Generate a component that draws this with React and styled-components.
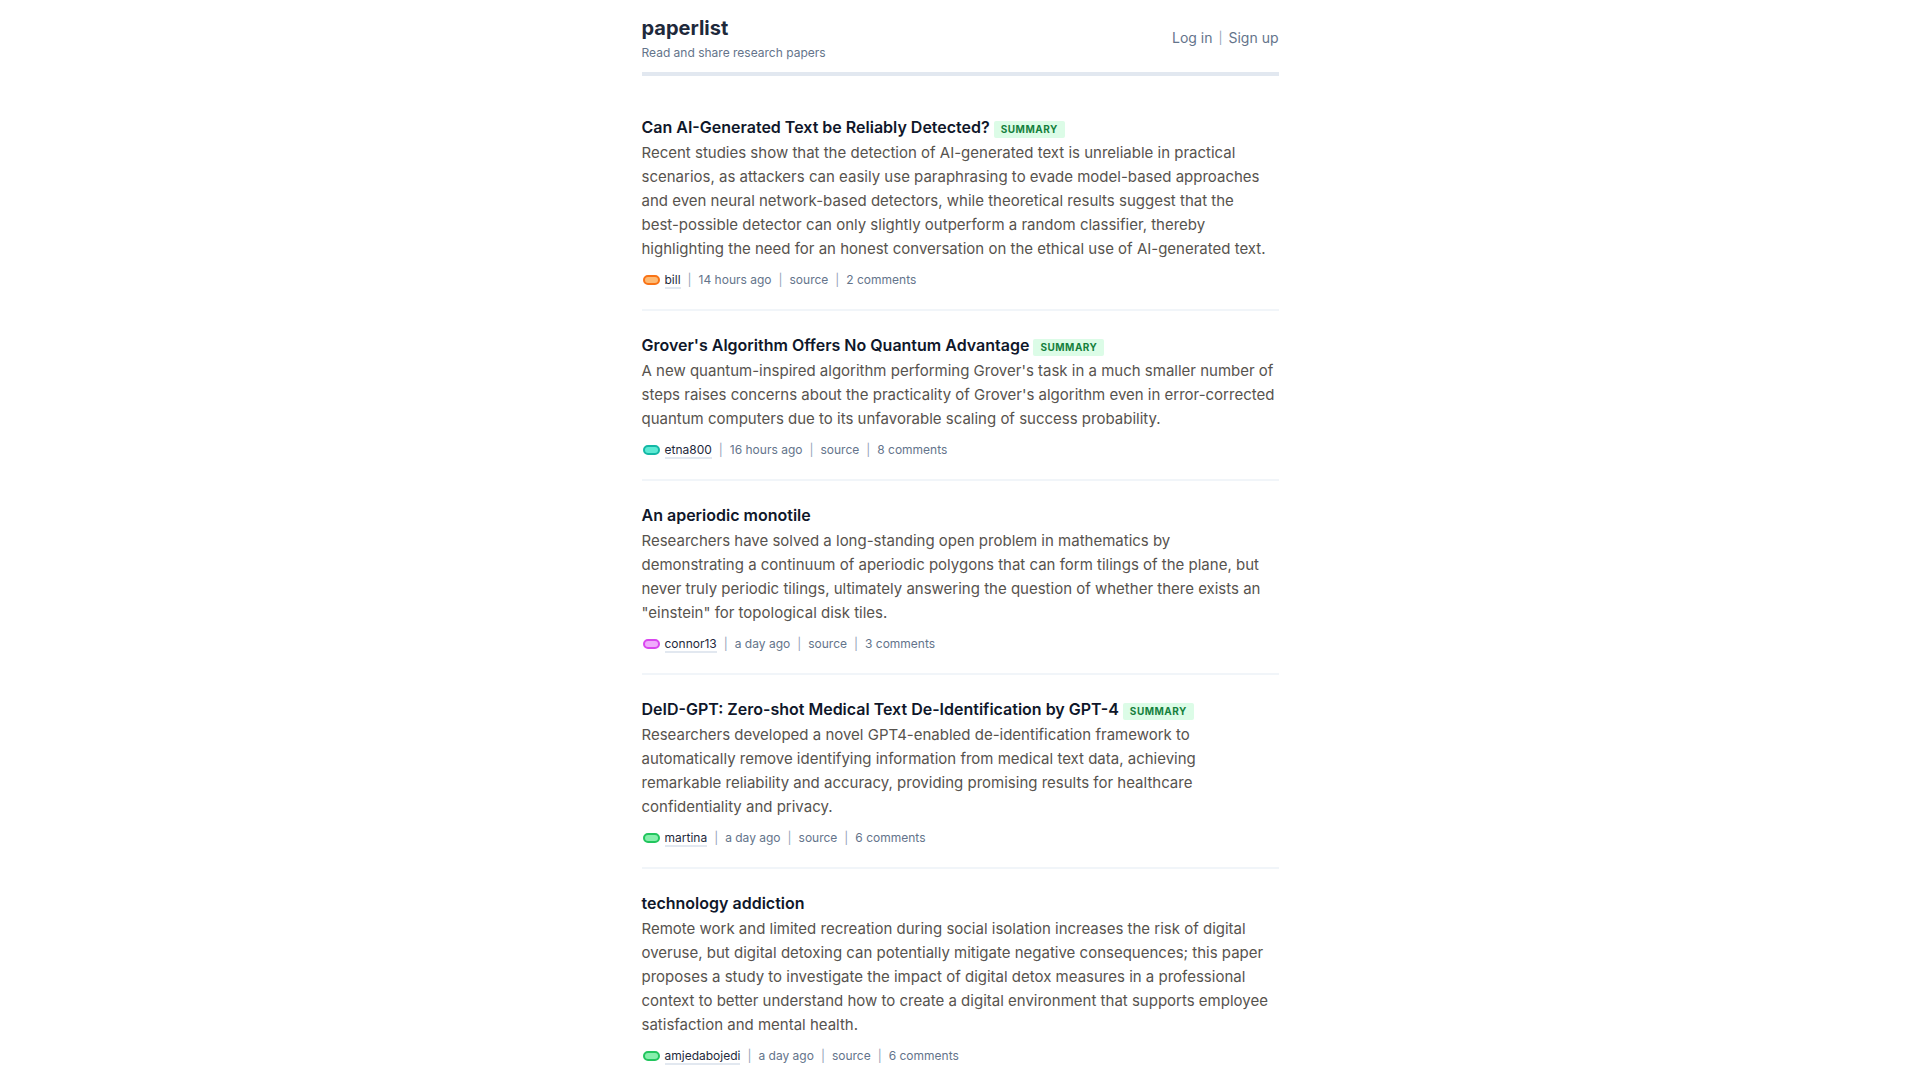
import styled, { createGlobalStyle } from 'styled-components'

const GlobalStyle = createGlobalStyle`
  * {
    box-sizing: border-box;
  }

  body {
    margin: 0;
    background: #ffffff;
    color: #57534e;
    font-family: Inter, 'Liberation Sans', sans-serif;
    font-size: 15px;
    line-height: 24px;
  }

  a {
    color: inherit;
    text-decoration: none;
  }
`

const Page = styled.div`
  max-width: 637px;
  margin: 0 auto;
`

const Header = styled.header`
  display: flex;
  align-items: center;
  justify-content: space-between;
  padding: 14px 0 8px;
  border-bottom: 4px solid #e2e8f0;
`

const Brand = styled.h1`
  margin: 0;
  color: #1e293b;
  font-size: 20px;
  font-weight: 700;
  line-height: 28px;
`

const Tagline = styled.p`
  margin: 0;
  color: #64748b;
  font-size: 12px;
  line-height: 22px;
`

const Nav = styled.nav`
  display: flex;
  gap: 6px;
  padding-bottom: 2px;
  color: #64748b;
  font-size: 14px;
`

const Separator = styled.span`
  color: #94a3b8;
  font-size: 12px;
`

const PaperList = styled.main`
  padding-top: 17px;
`

const Paper = styled.article`
  padding: 22px 0 19px;
  border-bottom: 2px solid #f1f5f9;

  &:last-child {
    border-bottom: 0;
    padding-bottom: 0;
  }
`

const PaperTitle = styled.h2`
  display: flex;
  align-items: baseline;
  gap: 4px;
  margin: 0;
  color: #0f172a;
  font-size: 16px;
  font-weight: 600;
  line-height: 25px;
`

const Badge = styled.span`
  padding: 0 7px;
  border-radius: 2px;
  background: #dcfce7;
  color: #15803d;
  font-size: 10px;
  font-weight: 700;
  line-height: 17px;
  letter-spacing: 0.5px;
  text-transform: uppercase;
`

const Summary = styled.p`
  margin: 0;
  padding-top: 1px;
  white-space: pre-line;
`

const Meta = styled.div`
  display: flex;
  align-items: center;
  gap: 7px;
  padding-top: 9px;
  color: #64748b;
  font-size: 12px;
  line-height: 20px;
`

const Author = styled.span`
  display: flex;
  align-items: center;
  gap: 5px;
  padding-left: 1px;
`

const Avatar = styled.span`
  width: 17px;
  height: 10px;
  border: 2px solid ${props => props.$ring};
  border-radius: 5px;
  background: ${props => props.$fill};
`

const AuthorLink = styled.a`
  padding-top: 2px;
  border-bottom: 2px solid #e2e8f0;
  color: #1e293b;
  line-height: 14px;
`

const papers = [
  {
    title: 'Can AI-Generated Text be Reliably Detected?',
    hasSummary: true,
    summary: 'Recent studies show that the detection of AI-generated text is unreliable in practical scenarios, as attackers can easily use paraphrasing to evade model-based approaches and even neural network-based detectors, while theoretical results suggest that the\nbest-possible detector can only slightly outperform a random classifier, thereby highlighting the need for an honest conversation on the ethical use of AI-generated text.',
    author: 'bill',
    ring: '#f97316',
    fill: '#fdba74',
    posted: '14 hours ago',
    comments: 2
  },
  {
    title: "Grover's Algorithm Offers No Quantum Advantage",
    hasSummary: true,
    summary: "A new quantum-inspired algorithm performing Grover's task in a much smaller number of steps raises concerns about the practicality of Grover's algorithm even in error-corrected quantum computers due to its unfavorable scaling of success probability.",
    author: 'etna800',
    ring: '#14b8a6',
    fill: '#5eead4',
    posted: '16 hours ago',
    comments: 8
  },
  {
    title: 'An aperiodic monotile',
    summary: 'Researchers have solved a long-standing open problem in mathematics by\ndemonstrating a continuum of aperiodic polygons that can form tilings of the plane, but never truly periodic tilings, ultimately answering the question of whether there exists an "einstein" for topological disk tiles.',
    author: 'connor13',
    ring: '#d946ef',
    fill: '#f0abfc',
    posted: 'a day ago',
    comments: 3
  },
  {
    title: 'DeID-GPT: Zero-shot Medical Text De-Identification by GPT-4',
    hasSummary: true,
    summary: 'Researchers developed a novel GPT4-enabled de-identification framework to automatically remove identifying information from medical text data, achieving remarkable reliability and accuracy, providing promising results for healthcare confidentiality and privacy.',
    author: 'martina',
    ring: '#22c55e',
    fill: '#86efac',
    posted: 'a day ago',
    comments: 6
  },
  {
    title: 'technology addiction',
    summary: 'Remote work and limited recreation during social isolation increases the risk of digital overuse, but digital detoxing can potentially mitigate negative consequences; this paper proposes a study to investigate the impact of digital detox measures in a professional context to better understand how to create a digital environment that supports employee satisfaction and mental health.',
    author: 'amjedabojedi',
    ring: '#22c55e',
    fill: '#86efac',
    posted: 'a day ago',
    comments: 6
  }
]

const App = () => {
  return (
    <>
      <GlobalStyle />
      <Page>
        <Header>
          <div>
            <Brand><a href="#home">paperlist</a></Brand>
            <Tagline>Read and share research papers</Tagline>
          </div>
          <Nav>
            <a href="#login">Log in</a>
            <Separator>|</Separator>
            <a href="#signup">Sign up</a>
          </Nav>
        </Header>
        <PaperList>
          {papers.map(paper => (
            <Paper key={paper.title}>
              <PaperTitle>
                <a href="#paper">{paper.title}</a>
                {paper.hasSummary && <Badge>Summary</Badge>}
              </PaperTitle>
              <Summary>{paper.summary}</Summary>
              <Meta>
                <Author>
                  <Avatar $ring={paper.ring} $fill={paper.fill} />
                  <AuthorLink href="#author">{paper.author}</AuthorLink>
                </Author>
                <Separator>|</Separator>
                <span>{paper.posted}</span>
                <Separator>|</Separator>
                <a href="#source">source</a>
                <Separator>|</Separator>
                <a href="#comments">{paper.comments} comments</a>
              </Meta>
            </Paper>
          ))}
        </PaperList>
      </Page>
    </>
  )
}

export default App
